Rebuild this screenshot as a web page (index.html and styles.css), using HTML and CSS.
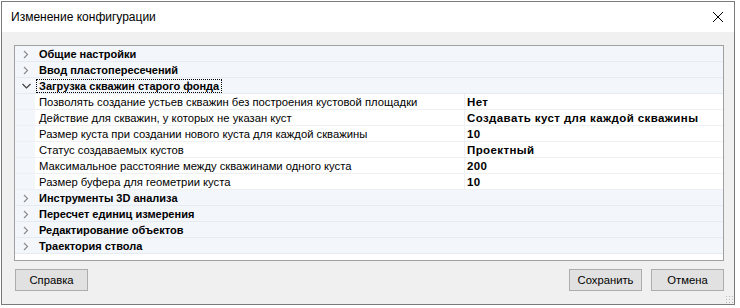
FILE: index.html
```html
<!DOCTYPE html>
<html lang="ru">

<head>
    <meta charset="UTF-8">
    <title>Изменение конфигурации</title>
    <link rel="stylesheet" href="styles.css">
</head>

<body>
    <div class="window">
        <div class="titlebar">
            <span class="title">Изменение конфигурации</span>
            <svg class="close" width="12" height="12" viewBox="0 0 12 12">
                <path d="M1 1 L11 11 M11 1 L1 11" stroke="#000" stroke-width="1" fill="none"/>
            </svg>
        </div>
        <div class="content">
            <div class="grid">
                <div class="row category">
                    <span class="toggle"><svg width="8" height="9" viewBox="0 0 8 9"><path d="M2 1 L5.5 4.5 L2 8" stroke="#8c8c8c" stroke-width="1.2" fill="none"/></svg></span>
                    <span class="cat-name">Общие настройки</span>
                </div>
                <div class="row category">
                    <span class="toggle"><svg width="8" height="9" viewBox="0 0 8 9"><path d="M2 1 L5.5 4.5 L2 8" stroke="#8c8c8c" stroke-width="1.2" fill="none"/></svg></span>
                    <span class="cat-name">Ввод пластопересечений</span>
                </div>
                <div class="row category">
                    <span class="toggle"><svg width="9" height="8" viewBox="0 0 9 8"><path d="M0.5 2 L4.5 6 L8.5 2" stroke="#404040" stroke-width="1.2" fill="none"/></svg></span>
                    <span class="cat-name focused">Загрузка скважин старого фонда</span>
                </div>

                <div class="row prop">
                    <span class="margin"></span>
                    <span class="name">Позволять создание устьев скважин без построения кустовой площадки</span>
                    <span class="value">Нет</span>
                </div>
                <div class="row prop">
                    <span class="margin"></span>
                    <span class="name">Действие для скважин, у которых не указан куст</span>
                    <span class="value">Создавать куст для каждой скважины</span>
                </div>
                <div class="row prop">
                    <span class="margin"></span>
                    <span class="name">Размер куста при создании нового куста для каждой скважины</span>
                    <span class="value">10</span>
                </div>
                <div class="row prop">
                    <span class="margin"></span>
                    <span class="name">Статус создаваемых кустов</span>
                    <span class="value">Проектный</span>
                </div>
                <div class="row prop">
                    <span class="margin"></span>
                    <span class="name">Максимальное расстояние между скважинами одного куста</span>
                    <span class="value">200</span>
                </div>
                <div class="row prop">
                    <span class="margin"></span>
                    <span class="name">Размер буфера для геометрии куста</span>
                    <span class="value">10</span>
                </div>

                <div class="row category">
                    <span class="toggle"><svg width="8" height="9" viewBox="0 0 8 9"><path d="M2 1 L5.5 4.5 L2 8" stroke="#8c8c8c" stroke-width="1.2" fill="none"/></svg></span>
                    <span class="cat-name">Инструменты 3D анализа</span>
                </div>
                <div class="row category">
                    <span class="toggle"><svg width="8" height="9" viewBox="0 0 8 9"><path d="M2 1 L5.5 4.5 L2 8" stroke="#8c8c8c" stroke-width="1.2" fill="none"/></svg></span>
                    <span class="cat-name">Пересчет единиц измерения</span>
                </div>
                <div class="row category">
                    <span class="toggle"><svg width="8" height="9" viewBox="0 0 8 9"><path d="M2 1 L5.5 4.5 L2 8" stroke="#8c8c8c" stroke-width="1.2" fill="none"/></svg></span>
                    <span class="cat-name">Редактирование объектов</span>
                </div>
                <div class="row category">
                    <span class="toggle"><svg width="8" height="9" viewBox="0 0 8 9"><path d="M2 1 L5.5 4.5 L2 8" stroke="#8c8c8c" stroke-width="1.2" fill="none"/></svg></span>
                    <span class="cat-name">Траектория ствола</span>
                </div>
            </div>

            <div class="buttons">
                <div class="button">Справка</div>
                <div class="spacer"></div>
                <div class="button">Сохранить</div>
                <div class="button">Отмена</div>
            </div>
            <div class="grip"></div>
        </div>
    </div>
</body>

</html>
```

FILE: styles.css
```css
body {
    margin: 0;
    padding: 1px 0 0 1px;
    background-color: #ffffff;
    font-family: "Liberation Sans", Arial, sans-serif;
    font-size: 11px;
    color: #000;
}

.window {
    width: 732px;
    height: 302px;
    border: 1px solid #7a7a7a;
    display: flex;
    flex-direction: column;
    background-color: #f0f0f0;
}

.titlebar {
    height: 30px;
    background-color: #fff;
    display: flex;
    align-items: center;
    padding: 0 8px 0 9px;
}

.title {
    flex: 1;
    font-size: 12px;
}

.close {
    margin-right: 2px;
}

.content {
    flex: 1;
    position: relative;
    padding: 13px 10px 0 12px;
}

.grid {
    height: 216px;
    border: 1px solid #a0a0a0;
    background-color: #fff;
    box-sizing: border-box;
}

.row {
    height: 16px;
    display: flex;
    align-items: center;
    box-sizing: border-box;
    padding-top: 1px;
}

.category {
    background-color: #f3f6fb;
    border-bottom: 1px solid #e6ebf2;
}

.toggle {
    width: 20px;
    display: flex;
    justify-content: center;
    padding-left: 1px;
}

.cat-name {
    font-weight: bold;
    font-size: 11px;
    padding: 0 2px;
    line-height: 12px;
    border: 1px dotted transparent;
}

.cat-name.focused {
    border-color: #000;
}

.prop {
    border-bottom: 1px solid #eef0f4;
    padding-top: 0;
}

.margin {
    width: 20px;
    align-self: stretch;
    background-color: #f3f6fb;
}

.name {
    width: 425px;
    padding-left: 4px;
    align-self: stretch;
    display: flex;
    align-items: center;
    border-right: 1px solid #eef0f4;
    white-space: nowrap;
    overflow: hidden;
    font-size: 11.25px;
}

.value {
    padding-left: 2px;
    font-weight: bold;
    font-size: 11.5px;
    letter-spacing: 0.4px;
    white-space: nowrap;
}

.buttons {
    display: flex;
    gap: 9px;
    margin-top: 8px;
    padding-left: 1px;
}

.spacer {
    flex: 1;
}

.button {
    width: 71px;
    height: 20px;
    border: 1px solid #adadad;
    background-color: #e1e1e1;
    display: flex;
    align-items: center;
    justify-content: center;
    font-size: 11.25px;
}

.grip {
    position: absolute;
    right: 1px;
    bottom: 1px;
    width: 8px;
    height: 8px;
    background-image: radial-gradient(#b8b8b8 0.9px, transparent 1px);
    background-size: 3px 3px;
}
```
